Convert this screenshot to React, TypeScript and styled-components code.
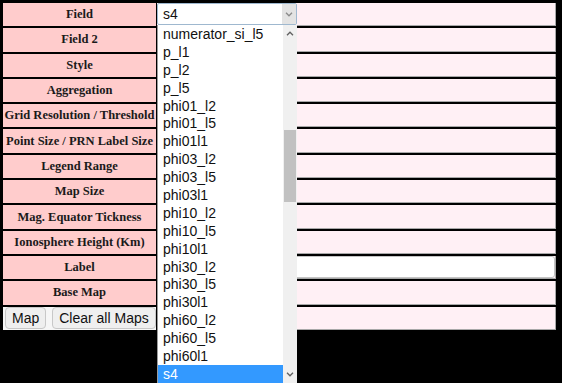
import React from "react";
import styled, { createGlobalStyle } from "styled-components";

const GlobalStyle = createGlobalStyle`
  html, body {
    margin: 0;
    padding: 0;
    background: #000000;
    overflow: hidden;
  }
  body {
    font-family: "Liberation Serif", "Times New Roman", serif;
  }
`;

const Page = styled.div`
  position: relative;
  width: 562px;
  height: 383px;
  padding: 3px 0 0 3px;
  box-sizing: border-box;
`;

const Form = styled.div`
  display: grid;
  grid-template-columns: 153px 399px;
  grid-auto-rows: 23.3px;
  column-gap: 1px;
  row-gap: 2px;
`;

const LabelCell = styled.div`
  display: flex;
  align-items: center;
  justify-content: center;
  background: #ffcccc;
  color: #1a1a1a;
  font-weight: bold;
  font-size: 12.5px;
  white-space: nowrap;
  overflow: hidden;
`;

const ValueCell = styled.div`
  display: flex;
  align-items: stretch;
  background: #fff0f5;
  border-right: 1px solid #a8a8a8;
  border-bottom: 1px solid #a8a8a8;
  box-sizing: border-box;
`;

const ButtonCell = styled.div`
  display: flex;
  align-items: center;
  gap: 6px;
  padding: 0 2px;
  background: #f6f6f6;
`;

const Button = styled.button`
  height: 22px;
  padding: 0 6px;
  border: 1px solid #c8c8c8;
  border-radius: 4px;
  background: #efefef;
  color: #111111;
  font-family: "Liberation Sans", Arial, sans-serif;
  font-size: 14px;
  white-space: nowrap;
`;

const SelectBox = styled.div`
  display: flex;
  align-items: center;
  justify-content: space-between;
  width: 140px;
  background: #ffffff;
  border: 1px solid #9fb8cf;
  border-radius: 2px;
  box-sizing: border-box;
  font-family: "Liberation Sans", Arial, sans-serif;
  font-size: 14px;
  color: #111111;
  padding-left: 5px;
`;

const SelectArrow = styled.div`
  display: flex;
  align-items: center;
  justify-content: center;
  width: 14px;
  align-self: stretch;
  background: #e3e3e3;
`;

const TextInput = styled.div`
  flex: 1;
  background: #ffffff;
  border: 1px solid #c4c4c4;
  border-radius: 3px;
`;

const Dropdown = styled.div`
  position: absolute;
  left: 157px;
  top: 25px;
  width: 140px;
  height: 358px;
  display: flex;
  background: #ffffff;
  border-left: 1px solid #9a9a9a;
  box-sizing: border-box;
  font-family: "Liberation Sans", Arial, sans-serif;
  font-size: 14px;
`;

const OptionList = styled.div`
  flex: 1;
  display: flex;
  flex-direction: column;
`;

const Option = styled.div<{ $selected?: boolean }>`
  height: 17.9px;
  flex: none;
  display: flex;
  align-items: center;
  padding-left: 5px;
  color: ${(p) => (p.$selected ? "#ffffff" : "#111111")};
  background: ${(p) => (p.$selected ? "#3399ff" : "transparent")};
`;

const Scrollbar = styled.div`
  width: 14px;
  display: flex;
  flex-direction: column;
  background: #f0f0f0;
`;

const ScrollArrow = styled.div`
  height: 17px;
  display: flex;
  align-items: center;
  justify-content: center;
`;

const Track = styled.div`
  flex: 1;
  padding-top: 88px;
`;

const Thumb = styled.div`
  height: 72px;
  margin: 0 1px;
  background: #c1c1c1;
`;

const Chevron = ({ up, color }: { up?: boolean; color: string }) => (
  <svg width="8" height="5" viewBox="0 0 8 5">
    <path
      d={up ? "M1 4.2 L4 1.2 L7 4.2" : "M1 0.8 L4 3.8 L7 0.8"}
      fill="none"
      stroke={color}
      strokeWidth="1.3"
    />
  </svg>
);

const labels = [
  "Field",
  "Field 2",
  "Style",
  "Aggregation",
  "Grid Resolution / Threshold",
  "Point Size / PRN Label Size",
  "Legend Range",
  "Map Size",
  "Mag. Equator Tickness",
  "Ionosphere Height (Km)",
  "Label",
  "Base Map",
];

const options = [
  "numerator_si_l5",
  "p_l1",
  "p_l2",
  "p_l5",
  "phi01_l2",
  "phi01_l5",
  "phi01l1",
  "phi03_l2",
  "phi03_l5",
  "phi03l1",
  "phi10_l2",
  "phi10_l5",
  "phi10l1",
  "phi30_l2",
  "phi30_l5",
  "phi30l1",
  "phi60_l2",
  "phi60_l5",
  "phi60l1",
  "s4",
];

const App = () => {
  const selected = "s4";

  return (
    <Page>
      <GlobalStyle />
      <Form>
        {labels.map((label) => (
          <React.Fragment key={label}>
            <LabelCell>{label}</LabelCell>
            <ValueCell>
              {label === "Field" ? (
                <SelectBox>
                  {selected}
                  <SelectArrow>
                    <Chevron color="#8a8a8a" />
                  </SelectArrow>
                </SelectBox>
              ) : null}
              {label === "Label" ? <TextInput /> : null}
            </ValueCell>
          </React.Fragment>
        ))}
        <ButtonCell>
          <Button>Map</Button>
          <Button>Clear all Maps</Button>
        </ButtonCell>
        <ValueCell />
      </Form>
      <Dropdown>
        <OptionList>
          {options.map((o) => (
            <Option key={o} $selected={o === selected}>
              {o}
            </Option>
          ))}
        </OptionList>
        <Scrollbar>
          <ScrollArrow>
            <Chevron up color="#606060" />
          </ScrollArrow>
          <Track>
            <Thumb />
          </Track>
          <ScrollArrow>
            <Chevron color="#606060" />
          </ScrollArrow>
        </Scrollbar>
      </Dropdown>
    </Page>
  );
};

export default App;
